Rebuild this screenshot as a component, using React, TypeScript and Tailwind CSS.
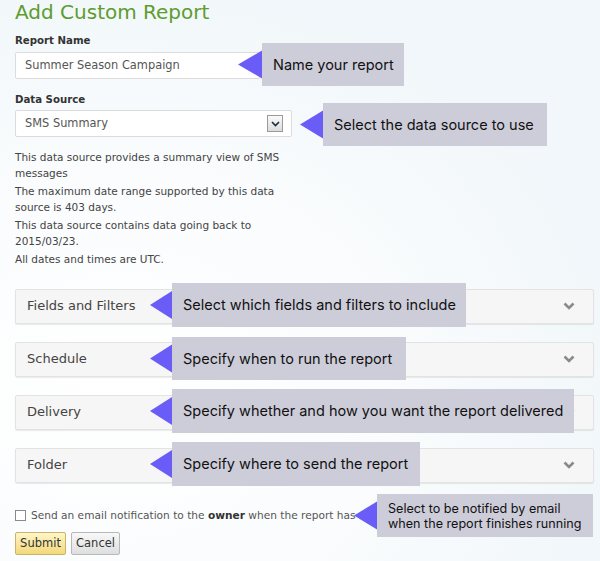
import React from "react";

const verdana = { fontFamily: '"DejaVu Sans", Verdana, sans-serif' };
const inter = { fontFamily: 'Inter, "Noto Sans", sans-serif' };

function Callout({
  left,
  top,
  width,
  height,
  arrowLeft,
  children,
  small,
}: {
  left: number;
  top: number;
  width: number;
  height: number;
  arrowLeft: number;
  children: React.ReactNode;
  small?: boolean;
}) {
  return (
    <div
      className="absolute"
      style={{ left: arrowLeft, top, width: left - arrowLeft + width, height }}
    >
      <div className="flex h-full items-center">
        <svg
          width={left - arrowLeft}
          height={height}
          viewBox={`0 0 ${left - arrowLeft} ${height}`}
          className="shrink-0"
        >
          <polygon
            points={`0,${height / 2} ${left - arrowLeft},${height / 2 - 14} ${left - arrowLeft},${height / 2 + 14}`}
            fill="#6a5cf6"
          />
        </svg>
        <div
          className={`flex h-full flex-1 items-center whitespace-nowrap bg-[#cdcdd9] pl-[11px] text-[#111] ${
            small ? "text-[12.6px] leading-[15px]" : "text-[14.5px]"
          }`}
          style={inter}
        >
          {children}
        </div>
      </div>
    </div>
  );
}

function Chevron() {
  return (
    <svg width="12" height="8" viewBox="0 0 12 8">
      <path d="M1.5 1.5 L6 6 L10.5 1.5" stroke="#8a8a8a" strokeWidth="2.6" fill="none" />
    </svg>
  );
}

function Section({ label }: { label: string }) {
  return (
    <div className="flex h-[35px] items-center justify-between rounded-[2px] border border-[#e3e3e3] bg-[#f6f6f6] pl-[11px] pr-[18px] shadow-[0_1px_1px_rgba(0,0,0,0.08)]">
      <span className="text-[13px] text-[#444]" style={verdana}>
        {label}
      </span>
      <Chevron />
    </div>
  );
}

export default function App() {
  return (
    <div
      className="relative h-[561px] w-[600px] overflow-hidden bg-[#f1f7fa]"
      style={verdana}
    >
      <div className="pointer-events-none absolute inset-0 bg-[radial-gradient(ellipse_at_20%_70%,#ffffff_0%,#fafcfd_40%,rgba(241,247,250,0)_75%)]" />
      <div className="relative flex flex-col pl-[15px] pr-[6px]">
        <h1 className="mt-[-1px] text-[20px] leading-[26px] text-[#5d9c2f]" style={verdana}>
          Add Custom Report
        </h1>
        <div className="mt-[9px] text-[10.2px] font-bold leading-[13px] text-[#333]">
          Report Name
        </div>
        <div className="mt-[5px] flex h-[27px] w-[245px] items-center rounded-[2px] border border-[#dcdcdc] bg-white pl-[9px] text-[11.4px] text-[#555]">
          Summer Season Campaign
        </div>
        <div className="mt-[14px] text-[10.2px] font-bold leading-[13px] text-[#333]">
          Data Source
        </div>
        <div className="mt-[4px] flex h-[27px] w-[277px] items-center justify-between rounded-[2px] border border-[#dcdcdc] bg-white pl-[9px] pr-[8px] text-[11.4px] text-[#555]">
          <span>SMS Summary</span>
          <div className="flex h-[17px] w-[16px] items-center justify-center border border-[#9a9a9a] bg-gradient-to-b from-[#fafafa] to-[#dcdcdc]">
            <svg width="9" height="6" viewBox="0 0 9 6">
              <path d="M1 1 L4.5 4.5 L8 1" stroke="#1a2a3a" strokeWidth="1.6" fill="none" />
            </svg>
          </div>
        </div>
        <div className="mt-[13px] flex w-[280px] flex-col gap-[3px] text-[10.5px] leading-[15.5px] text-[#444]">
          <p>This data source provides a summary view of SMS messages</p>
          <p>The maximum date range supported by this data source is 403 days.</p>
          <p>This data source contains data going back to 2015/03/23.</p>
          <p>All dates and times are UTC.</p>
        </div>
        <div className="mt-[21px] flex flex-col gap-[18px]">
          <Section label="Fields and Filters" />
          <Section label="Schedule" />
          <Section label="Delivery" />
          <Section label="Folder" />
        </div>
        <label className="mt-[25px] flex items-center gap-[5px] text-[10.6px] text-[#555]">
          <span className="h-[11px] w-[11px] border border-[#8a8a8a] bg-white" />
          <span>
            Send an email notification to the <b className="text-[#333]">owner</b> when the report has
          </span>
        </label>
        <div className="mt-[9px] flex gap-[5px]">
          <button className="h-[23px] w-[51px] rounded-[2px] border border-[#c9b46a] bg-gradient-to-b from-[#fff6c8] to-[#f3d878] text-[11.5px] text-[#333]">
            Submit
          </button>
          <button className="h-[23px] w-[49px] rounded-[2px] border border-[#b8b8b8] bg-gradient-to-b from-[#f8f8f8] to-[#dedede] text-[11.5px] text-[#333]">
            Cancel
          </button>
        </div>
      </div>

      <Callout left={262} top={43} width={142} height={43} arrowLeft={238}>
        Name your report
      </Callout>
      <Callout left={323} top={103} width={224} height={43} arrowLeft={300}>
        Select the data source to use
      </Callout>
      <Callout left={172} top={283} width={294} height={44} arrowLeft={150}>
        Select which fields and filters to include
      </Callout>
      <Callout left={172} top={337} width={234} height={43} arrowLeft={150}>
        Specify when to run the report
      </Callout>
      <Callout left={172} top={389} width={402} height={44} arrowLeft={150}>
        Specify whether and how you want the report delivered
      </Callout>
      <Callout left={172} top={442} width={248} height={44} arrowLeft={150}>
        Specify where to send the report
      </Callout>
      <Callout left={377} top={494} width={216} height={43} arrowLeft={354} small>
        <span>
          Select to be notified by email
          <br />
          when the report finishes running
        </span>
      </Callout>
    </div>
  );
}
